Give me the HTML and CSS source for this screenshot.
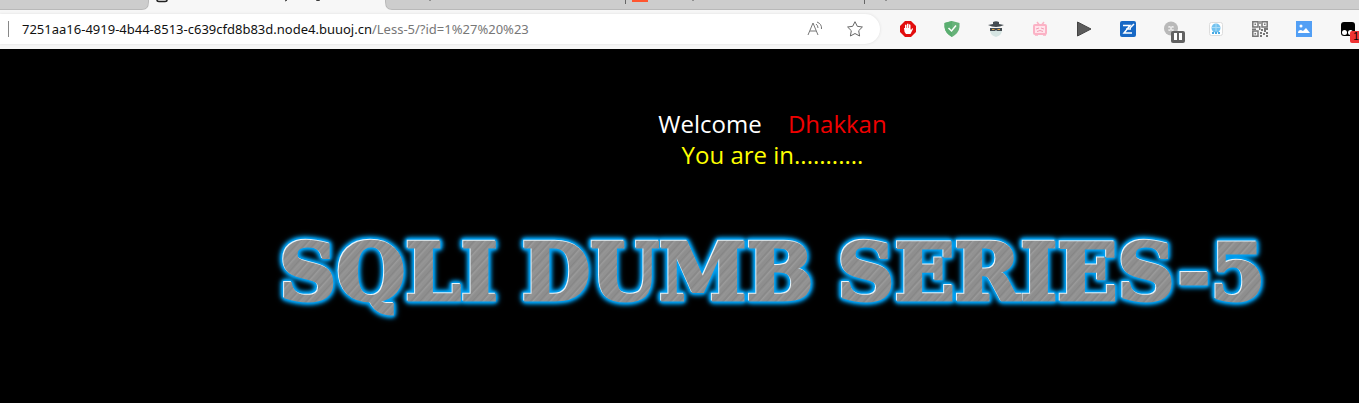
FILE: index.html
```html
<!DOCTYPE html>
<html lang="en">
<head>
<meta charset="utf-8">
<title>Less-5</title>
<link rel="stylesheet" href="styles.css">
</head>
<body>
<header class="browser">
  <svg class="tabs" width="100%" height="14" aria-hidden="true">
    <rect width="100%" height="10" fill="#cdcdcd"/>
    <path d="M0 9.500H142Q148.500 9.500 148.500 2V0M385.500 0V2Q385.500 9.500 392 9.500H3000" fill="none" stroke="#b9b9b9"/>
    <path d="M149 0V2Q149 10 142 10H392Q385 10 385 2V0Z" fill="#f7f7f7"/>
    <path d="M157 0Q157 1.500 159 1.500H165Q167 1.500 167 0" fill="none" stroke="#222" stroke-width="1.500"/>
    <path d="M287 0L285 1M316 0Q318 1 320 0" fill="none" stroke="#222"/>
    <path d="M430 0V1M693 0V1M886 0V1" stroke="#555"/>
    <path d="M625.500 0V4M864.500 0V4" stroke="#666"/>
    <path d="M632 0H648V2H632Z" fill="#ff5630"/>
  </svg>
  <div class="toolbar">
    <div class="address">
      <span class="divider"></span>
      <a class="url" href="#"><span class="host">7251aa16-4919-4b44-8513-c639cfd8b83d.node4.buuoj.cn</span>/Less-5/?id=1%27%20%23</a>
      <button class="icon" aria-label="Read aloud"><svg viewBox="0 0 16 16" fill="none" stroke="#777"><path d="M1 14L6 2L11 14M3 10H9M9 3Q11 4.500 11 7M10 1Q15 3 14.500 8"/></svg></button>
      <button class="icon" aria-label="Add to favorites"><svg viewBox="0 0 16 16" fill="none" stroke="#666"><path stroke-linejoin="round" d="M8 .7L10.300 5.300L15.400 6L11.700 9.700L12.600 15L8 12.500L3.400 15L4.300 9.700L.6 6L5.700 5.300Z"/></svg></button>
    </div>
    <div class="extensions">
      <button class="icon" aria-label="Content blocker"><svg viewBox="0 0 16 16"><path fill="#e20d0d" d="M5 0H11L16 5V11L11 16H5L0 11V5Z"/><path fill="#fff" d="M4 7H5V4Q6 3 6.500 4V7H7V3Q8 2 8.500 3V7H9V3.500Q10 3 10.500 4V8L11 9L12 7.500Q13 7 13 8L10.500 13H6Q4 11 4 7Z"/></svg></button>
      <button class="icon" aria-label="Tracking protection"><svg viewBox="0 0 16 16"><path fill="#67b279" d="M8 0Q12 1 15.500 2V6Q15 12 8 16Q1 12 .5 6V2Q4 1 8 0Z"/><path fill="#5aae70" d="M8 0V16Q1 12 .5 6V2Q4 1 8 0Z"/><path fill="none" stroke="#fff" stroke-width="1.500" d="M4.500 7L7.500 10L12 4.500"/></svg></button>
      <button class="icon" aria-label="Agent"><svg viewBox="0 0 16 16"><path fill="#d5e4e2" d="M2 7H14Q15 14 8 16Q1 14 2 7Z"/><path fill="#444b50" d="M5 1Q8 -.5 11 1V3L16 4Q12 6 8 6Q4 6 0 4L5 3ZM2 7H14V10H9L8 9L7 10H2Z"/><path stroke="#e3a343" d="M4 8.500H6.500M9.500 8.500H12"/></svg></button>
      <button class="icon" aria-label="Video helper"><svg viewBox="0 0 16 16" fill="none"><path stroke="#f9b3c5" stroke-width="1.500" d="M5 1L7 3.500M12 1L10 3.500M3 14H6M11 14H14"/><rect x="2" y="4" width="12" height="9" rx="1" fill="#ffe4eb" stroke="#fbb2c5" stroke-width="2"/><path stroke="#f39cb5" d="M4 8L7 7M9 7L12 8M5 10.500L8 9.500L11 10.500"/></svg></button>
      <button class="icon" aria-label="Play"><svg viewBox="0 0 16 16"><path fill="#5b5b5b" stroke="#444" d="M1.500 1L15 8L1.500 15Z"/></svg></button>
      <button class="icon" aria-label="Notes"><svg viewBox="0 0 16 16"><rect width="16" height="16" rx="2" fill="#1768c5"/><path fill="none" stroke="#fff" stroke-width="1.500" d="M3 4.500H10L4 12H12M6 8H11M10 7L14 3"/></svg></button>
      <button class="icon" aria-label="Paused extension"><svg viewBox="0 0 16 16"><circle cx="7" cy="7.500" r="7" fill="#b9b9b9"/><path fill="none" stroke="#eee" d="M5 5L9 10M9 5L5 10M4 6H10M4 9H10"/><rect x="7" y="10" width="14" height="12" rx="2" fill="#626262"/><path stroke="#fff" stroke-width="3" d="M11.500 12V19M16.500 12V19"/></svg></button>
      <button class="icon" aria-label="Assistant"><svg viewBox="0 0 16 16"><rect x="1.500" y="1.500" width="13" height="13" rx="2" fill="#fff" stroke="#ddd"/><circle cx="8" cy="7" r="4.500" fill="#72c2ef"/><path fill="none" stroke="#a9dcf7" d="M4 6.500H12M8 3V10"/><path stroke="#48aae3" stroke-width="2" stroke-dasharray="2 1" d="M4 12H12"/></svg></button>
      <button class="icon" aria-label="QR code"><svg viewBox="0 0 16 16"><path fill="none" stroke="#777" stroke-width="1.500" d="M.8.8H6V6H.8ZM10 .8H15.200V6H10ZM.8 10H6V15.200H.8Z"/><path fill="#777" d="M2.500 2.500H4V4H2.500ZM12 2.500H13.500V4H12ZM2.500 12H4V13.500H2.500ZM7.300 0H8.700V3H7.300ZM7 5H8.500V9H7ZM0 7.500H4V9H0ZM9 8H11V10H9ZM12 7H16V9H14V11H12ZM8 11H10V13H8ZM11 12H13V14H11ZM14 11H16V13H14ZM8 14H10V16H8ZM14 14H16V16H14Z"/></svg></button>
      <button class="icon" aria-label="Images"><svg viewBox="0 0 16 16"><rect width="16" height="16" fill="#529ff5"/><circle cx="5" cy="5" r="1.500" fill="#fff"/><path fill="#fff" d="M2 12Q2 9 5 9L7 10L10 7L14 12Z"/></svg></button>
      <button class="icon" aria-label="Script manager, 1 active"><svg viewBox="0 0 16 16"><rect x="1" y="1" width="14" height="14" rx="3" fill="#000"/><circle cx="4.500" cy="11.500" r="2.500" fill="#fff"/><circle cx="10.500" cy="11.500" r="2.500" fill="#fff"/></svg><span class="badge">1</span></button>
    </div>
  </div>
</header>
<main class="page">
  <p class="welcome">Welcome <span class="name">Dhakkan</span></p>
  <p class="status">You are in...........</p>
  <h1 class="banner"><span>SQLI</span> <span>DUMB</span> <span>SERIES-5</span></h1>
</main>
</body>
</html>
```

FILE: styles.css
```css
* { box-sizing: border-box; }
body {
  margin: 0;
  min-height: 100vh;
  background: #000;
  font-family: "Open Sans", "Noto Sans", sans-serif;
  overflow: hidden;
}
.browser { background: #f7f7f7; }
.tabs { display: block; }
.toolbar {
  display: flex;
  align-items: center;
  height: 35px;
  padding-bottom: 5px;
}
.address {
  display: flex;
  align-items: center;
  flex: 0 0 880px;
  height: 30px;
  padding: 0 17px 0 8px;
  background: #fff;
  border-radius: 0 15px 15px 0;
  box-shadow: 0 0 3px #ddd;
}
.divider { width: 1px; height: 16px; background: #888; }
.url {
  flex: 1;
  margin-left: 13px;
  color: #777;
  font-family: "Noto Sans", "Open Sans", sans-serif;
  font-size: 13px;
  text-decoration: none;
  white-space: nowrap;
}
.host { color: #111; }
.icon {
  position: relative;
  flex: none;
  width: 16px;
  height: 16px;
  padding: 0;
  border: 0;
  background: none;
}
.icon svg { display: block; width: 16px; height: 16px; overflow: visible; }
.address .icon + .icon { margin-left: 24px; }
.extensions { display: flex; gap: 28px; padding-left: 20px; }
.badge {
  position: absolute;
  left: 10px;
  top: 10px;
  width: 12px;
  height: 12px;
  border-radius: 2px;
  background: #e33;
  color: #000;
  font-size: 10px;
  line-height: 12px;
}
.page { padding: 59px 0 0 186px; text-align: center; }
.welcome, .status { margin: 0; font-size: 24px; line-height: 31px; }
.welcome { color: #fff; }
.name { margin-left: 20px; color: #f00000; }
.status { color: #ff0; }
.banner {
  display: flex;
  justify-content: center;
  gap: 24px;
  margin: 58px 0 0;
  font: bold 79px/90px "DejaVu Serif", serif;
  white-space: nowrap;
  filter: drop-shadow(-1px -1px 0 #e8f4fa) drop-shadow(0 0 1px #00a2f5) drop-shadow(0 0 1px #00a2f5) drop-shadow(0 0 2px #00a2f5) drop-shadow(0 0 2px #00a2f5);
}
.banner span {
  color: transparent;
  -webkit-text-stroke: 3px transparent;
  background: repeating-linear-gradient(132deg, #929292 0 2px, #898989 3px 4px, #9b9b9b 5px, #8e8e8e 7px 9px, #868686 10px, #959595 12px 13px);
  background-clip: text;
  -webkit-background-clip: text;
}
```
